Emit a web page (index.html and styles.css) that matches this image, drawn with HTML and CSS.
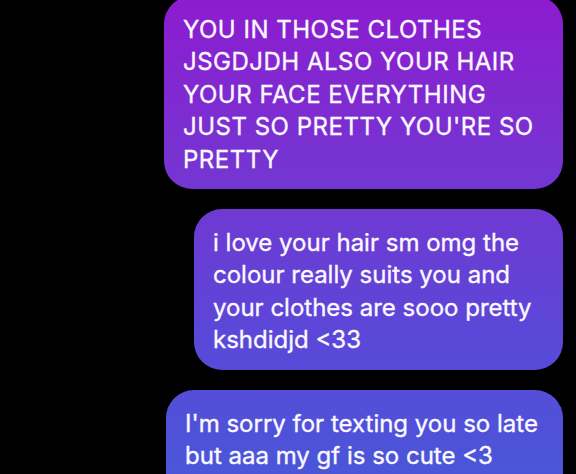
FILE: index.html
```html
<!DOCTYPE html>
<html>
<head>
<meta charset="utf-8">
<link rel="stylesheet" href="styles.css">
</head>
<body>
<div class="thread">
  <div class="bubble b1">YOU IN THOSE CLOTHES<br>JSGDJDH ALSO YOUR HAIR<br>YOUR FACE EVERYTHING<br>JUST SO PRETTY YOU'RE SO<br>PRETTY</div>
  <div class="bubble b2">i love your hair sm omg the<br>colour really suits you and<br>your clothes are sooo pretty<br>kshdidjd &lt;33</div>
  <div class="bubble b3">I'm sorry for texting you so late<br>but aaa my gf is so cute &lt;3<br>&nbsp;</div>
</div>
</body>
</html>
```
FILE: styles.css
```css
html, body {
  margin: 0;
  padding: 0;
  background: #000;
  height: 100%;
  overflow: hidden;
}
.thread {
  display: flex;
  flex-direction: column;
  align-items: flex-end;
  gap: 20px;
  padding-right: 13px;
  margin-top: -4px;
}
.bubble {
  box-sizing: border-box;
  border-radius: 28px;
  padding: 18px 12px 13px 19px;
  font-family: Inter, "Liberation Sans", Arial, sans-serif;
  font-size: 24px;
  font-weight: 400;
  -webkit-text-stroke: 0.35px #fbf8ff;
  line-height: 32.4px;
  color: #fbf8ff;
  white-space: nowrap;
  background: linear-gradient(to bottom, #8c1ccf 0px, #7436d2 180px, #5a48d8 340px, #4a56d8 474px);
  background-attachment: fixed;
}
.b1 { width: 399px; letter-spacing: 0.5px; }
.b2 { width: 369px; }
.b3 { width: 397px; }
```
